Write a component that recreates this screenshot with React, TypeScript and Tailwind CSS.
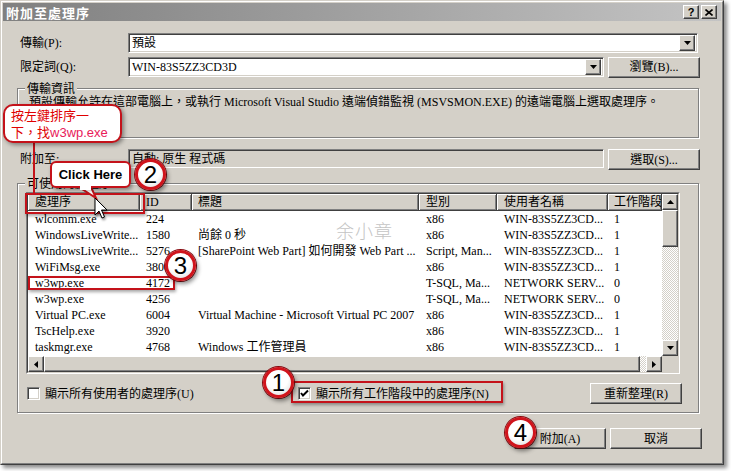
import React from "react";

const SERIF = "font-['Liberation_Serif','Noto_Sans_CJK_TC',serif]";

const rows: string[][] = [
  ["wlcomm.exe", "224", "", "x86", "WIN-83S5ZZ3CD...", "1"],
  ["WindowsLiveWrite...", "1580", "尚餘 0 秒", "x86", "WIN-83S5ZZ3CD...", "1"],
  ["WindowsLiveWrite...", "5276", "[SharePoint Web Part] 如何開發 Web Part ...", "Script, Man...", "WIN-83S5ZZ3CD...", "1"],
  ["WiFiMsg.exe", "3800", "", "x86", "WIN-83S5ZZ3CD...", "1"],
  ["w3wp.exe", "4172", "", "T-SQL, Ma...", "NETWORK SERV...", "0"],
  ["w3wp.exe", "4256", "", "T-SQL, Ma...", "NETWORK SERV...", "0"],
  ["Virtual PC.exe", "6004", "Virtual Machine - Microsoft Virtual PC 2007", "x86", "WIN-83S5ZZ3CD...", "1"],
  ["TscHelp.exe", "3920", "", "x86", "WIN-83S5ZZ3CD...", "1"],
  ["taskmgr.exe", "4768", "Windows 工作管理員", "x86", "WIN-83S5ZZ3CD...", "1"],
];

const colCls = [
  "w-[112px] pl-[7px]",
  "w-[52px] pl-[6px]",
  "w-[227px] pl-[6px]",
  "w-[78px] pl-[7px]",
  "w-[111px] pl-[7px]",
  "w-[54px] pl-[6px]",
];
const headers = ["處理序", "ID", "標題", "型別", "使用者名稱", "工作階段"];

const RAISED =
  "bg-[#d4d0c8] border border-t-white border-l-white border-r-[#404040] border-b-[#404040] shadow-[inset_-1px_-1px_0_#808080]";
const SUNKEN =
  "border border-t-[#808080] border-l-[#808080] border-r-white border-b-white shadow-[inset_1px_1px_0_#404040,inset_-1px_-1px_0_#d4d0c8]";
const HATCH =
  "bg-[repeating-conic-gradient(#d4d0c8_0_25%,#ffffff_0_50%)] bg-[length:2px_2px]";

function Tri({ dir }: { dir: "up" | "down" | "left" | "right" }) {
  const pts =
    dir === "down"
      ? "0,0 7,0 3.5,4"
      : dir === "up"
      ? "0,4 7,4 3.5,0"
      : dir === "left"
      ? "4,0 4,7 0,3.5"
      : "0,0 0,7 4,3.5";
  const w = dir === "down" || dir === "up" ? 7 : 4;
  const h = dir === "down" || dir === "up" ? 4 : 7;
  return (
    <svg width={w} height={h} viewBox={`0 0 ${w} ${h}`}>
      <polygon points={pts} fill="#000" />
    </svg>
  );
}

function ArrowBtn({ dir, className = "" }: { dir: "up" | "down" | "left" | "right"; className?: string }) {
  return (
    <div className={`${RAISED} flex items-center justify-center shrink-0 ${className}`}>
      <Tri dir={dir} />
    </div>
  );
}

function Btn({ children, className = "" }: { children: React.ReactNode; className?: string }) {
  return (
    <div
      className={`${RAISED} flex items-center justify-center h-[21px] w-[92px] shrink-0 text-[12px] leading-none text-black ${className}`}
    >
      {children}
    </div>
  );
}

function CheckBox({ checked }: { checked?: boolean }) {
  return (
    <div className={`${SUNKEN} w-[13px] h-[13px] bg-white shrink-0 flex items-center justify-center`}>
      {checked && (
        <svg width="9" height="9" viewBox="0 0 9 9">
          <path d="M1 4 L3 6.5 L8 1.5" stroke="#000" strokeWidth="2" fill="none" />
        </svg>
      )}
    </div>
  );
}

function Num({ n, className }: { n: string; className: string }) {
  return (
    <div
      className={`absolute w-[31px] h-[31px] rounded-full border-[3px] border-[#d0141c] bg-[radial-gradient(circle_at_45%_35%,#ffffff_50%,#d6d6d6)] shadow-[2px_3px_4px_rgba(0,0,0,0.45),0_0_0_1px_#8a0a10] flex items-center justify-center font-['Liberation_Sans',sans-serif] text-[24px] leading-none text-black ${className}`}
    >
      {n}
    </div>
  );
}

export default function App() {
  return (
    <div className={`relative w-[731px] h-[471px] bg-white overflow-hidden ${SERIF}`}>
      {/* window */}
      <div className="w-[724px] h-[465px] border border-t-[#d4d0c8] border-l-[#d4d0c8] border-r-[#404040] border-b-[#404040] shadow-[3px_3px_4px_rgba(0,0,0,0.45)]">
        <div className="w-full h-full border border-t-white border-l-white border-r-[#808080] border-b-[#808080] bg-[#d4d0c8] p-[1px] flex flex-col">
          {/* title bar */}
          <div className="h-[18px] shrink-0 flex items-center bg-gradient-to-r from-[#808080] to-[#c4c4c4] pl-[3px] pr-[4px]">
            <span className="text-white font-bold text-[13px] leading-none font-['Noto_Sans_CJK_TC',sans-serif] tracking-[1px]">
              附加至處理序
            </span>
            <div className="ml-auto flex gap-[2px]">
              <div className={`${RAISED} w-[16px] h-[14px] flex items-center justify-center text-[11px] font-bold leading-none font-['Liberation_Sans',sans-serif]`}>
                ?
              </div>
              <div className={`${RAISED} w-[16px] h-[14px] flex items-center justify-center`}>
                <svg width="8" height="7" viewBox="0 0 8 7">
                  <path d="M0.5 0.5 L7.5 6.5 M7.5 0.5 L0.5 6.5" stroke="#000" strokeWidth="1.6" />
                </svg>
              </div>
            </div>
          </div>

          {/* body */}
          <div className="flex-1 flex flex-col text-[12px] leading-[14px] text-black">
            {/* row 1 */}
            <div className="mt-[12px] flex items-center h-[20px] pl-[17px]">
              <span className="w-[108px]">傳輸(P):</span>
              <div className={`${SUNKEN} w-[570px] h-[20px] bg-white flex items-center pl-[3px] pr-[2px]`}>
                <span>預設</span>
                <ArrowBtn dir="down" className="ml-auto w-[16px] h-[16px]" />
              </div>
            </div>
            {/* row 2 */}
            <div className="mt-[4px] flex items-center h-[20px] pl-[17px]">
              <span className="w-[108px]">限定詞(Q):</span>
              <div className={`${SUNKEN} w-[476px] h-[20px] bg-white flex items-center pl-[3px] pr-[2px]`}>
                <span>WIN-83S5ZZ3CD3D</span>
                <ArrowBtn dir="down" className="ml-auto w-[16px] h-[16px]" />
              </div>
              <Btn className="ml-[4px] h-[20px]">瀏覽(B)...</Btn>
            </div>
            {/* group 1 */}
            <div className="relative mt-[11px] ml-[14px] w-[682px] h-[50px] border border-[#808080] shadow-[inset_1px_1px_0_#fff,1px_1px_0_#fff] pl-[11px] pt-[6px]">
              <span className="absolute -top-[7px] left-[7px] px-[2px] bg-[#d4d0c8]">傳輸資訊</span>
              <div className="whitespace-nowrap">
                預設傳輸允許在這部電腦上，或執行 Microsoft Visual Studio 遠端偵錯監視 (MSVSMON.EXE) 的遠端電腦上選取處理序。
              </div>
            </div>
            {/* row 附加至 */}
            <div className="mt-[11px] flex items-start h-[21px] pl-[17px]">
              <span className="w-[108px] mt-[3px]">附加至:</span>
              <div className={`${SUNKEN} w-[476px] h-[19px] bg-[#d4d0c8] flex items-center pl-[3px]`}>
                自動: 原生 程式碼
              </div>
              <Btn className="ml-[4px]">選取(S)...</Btn>
            </div>
            {/* group 2 */}
            <div className="relative mt-[13px] ml-[14px] w-[682px] h-[230px] border border-[#808080] shadow-[inset_1px_1px_0_#fff,1px_1px_0_#fff] pl-[8px] pt-[8px]">
              <span className="absolute -top-[7px] left-[7px] px-[2px] bg-[#d4d0c8]">可使用的處理序</span>
              {/* list */}
              <div className={`relative w-[654px] h-[182px] border border-t-[#808080] border-l-[#808080] border-r-white border-b-white bg-white`}>
                <div className="w-full h-full border border-t-[#404040] border-l-[#404040] border-r-[#d4d0c8] border-b-[#d4d0c8] flex flex-col">
                  <div className="flex h-[162px]">
                    <div className="w-[634px] flex flex-col overflow-hidden">
                      <div className="flex h-[17px] shrink-0">
                        {headers.map((h, i) => (
                          <div
                            key={i}
                            className={`${colCls[i]} shrink-0 h-[17px] bg-[#d4d0c8] border-r border-b border-r-[#404040] border-b-[#404040] shadow-[inset_1px_1px_0_#fff,inset_-1px_-1px_0_#808080] flex items-center whitespace-nowrap overflow-hidden`}
                          >
                            {h}
                          </div>
                        ))}
                      </div>
                      {rows.map((r, ri) => (
                        <div key={ri} className="flex h-[16px] shrink-0 items-center">
                          {r.map((c, ci) => (
                            <div key={ci} className={`${colCls[ci]} shrink-0 whitespace-nowrap overflow-hidden`}>
                              {c}
                            </div>
                          ))}
                        </div>
                      ))}
                    </div>
                    {/* vscroll */}
                    <div className="w-[16px] flex flex-col">
                      <ArrowBtn dir="up" className="w-[16px] h-[16px]" />
                      <div className={`${RAISED} w-[16px] h-[37px]`} />
                      <div className={`flex-1 ${HATCH}`} />
                      <ArrowBtn dir="down" className="w-[16px] h-[16px]" />
                    </div>
                  </div>
                  {/* hscroll */}
                  <div className="flex h-[16px]">
                    <ArrowBtn dir="left" className="w-[16px] h-[16px]" />
                    <div className={`${RAISED} w-[596px] h-[16px]`} />
                    <div className={`w-[6px] h-[16px] ${HATCH}`} />
                    <ArrowBtn dir="right" className="w-[16px] h-[16px]" />
                    <div className="w-[16px] h-[16px] bg-[#d4d0c8]" />
                  </div>
                </div>
                <span className="absolute left-[309px] top-[28px] text-[18px] leading-none text-[#c4c4c4] font-['Noto_Sans_CJK_TC',sans-serif] font-light tracking-[1px]">
                  余小章
                </span>
              </div>
              {/* checkbox row */}
              <div className="mt-[9px] flex items-center h-[21px]">
                <div className="w-[272px] flex items-center pl-[1px] gap-[5px]">
                  <CheckBox />
                  <span>顯示所有使用者的處理序(U)</span>
                </div>
                <div className="flex items-center gap-[5px]">
                  <CheckBox checked />
                  <span>顯示所有工作階段中的處理序(N)</span>
                </div>
                <Btn className="ml-auto mr-[16px]">重新整理(R)</Btn>
              </div>
            </div>
            {/* bottom buttons */}
            <div className="mt-[15px] flex justify-end gap-[4px] pr-[19px]">
              <Btn>附加(A)</Btn>
              <Btn>取消</Btn>
            </div>
          </div>
        </div>
      </div>

      {/* annotations */}
      <div className="absolute left-[25px] top-[193px] w-[120px] h-[21px] border-2 border-[#c4121a] shadow-[1px_2px_3px_rgba(0,0,0,0.35)]" />
      <div className="absolute left-[28px] top-[276px] w-[147px] h-[14px] border-2 border-[#c4121a] shadow-[1px_2px_3px_rgba(0,0,0,0.35)]" />
      <div className="absolute left-[291px] top-[381px] w-[212px] h-[22px] border-2 border-[#c4121a] shadow-[1px_2px_3px_rgba(0,0,0,0.35)]" />

      {/* callout 1 line */}
      <div className="absolute left-[33px] top-[141px] w-[2px] h-[53px] bg-[#c4121a]" />
      <div className="absolute left-[3px] top-[104px] w-[119px] h-[39px] rounded-[10px] border-2 border-[#c4121a] bg-white shadow-[2px_2px_4px_rgba(0,0,0,0.4)] pl-[6px] pt-[1px] font-['Liberation_Sans','Noto_Sans_CJK_TC',sans-serif] text-[13px] leading-[17px] text-[#e00000]">
        <div>按左鍵排序一</div>
        <div>
          下，找<span className="text-[#e8205a]">w3wp.exe</span>
        </div>
      </div>

      {/* click here callout */}
      <svg className="absolute left-[70px] top-[184px]" width="32" height="18" viewBox="0 0 32 18">
        <polygon points="9,3 21,3 26,14" fill="#fff" stroke="#c4121a" strokeWidth="2" />
      </svg>
      <div className="absolute left-[50px] top-[161px] w-[81px] h-[27px] rounded-[6px] border-2 border-[#c4121a] bg-white shadow-[2px_2px_4px_rgba(0,0,0,0.4)] flex items-center justify-center font-['Liberation_Sans',sans-serif] font-bold text-[13px] leading-none text-black">
        Click Here
      </div>
      <svg className="absolute left-[79px] top-[186px]" width="14" height="4" viewBox="0 0 14 4">
        <rect x="1" y="0" width="11" height="4" fill="#fff" />
      </svg>

      {/* cursor */}
      <svg className="absolute left-[94px] top-[197px] drop-shadow-[1px_2px_1px_rgba(0,0,0,0.4)]" width="14" height="24" viewBox="0 0 14 24">
        <path d="M1 1 L1 18 L5 14 L8 21 L10.5 20 L7.5 13 L13 13 Z" fill="#fff" stroke="#000" strokeWidth="1" strokeLinejoin="miter" />
      </svg>

      <Num n="2" className="left-[135px] top-[159px]" />
      <Num n="3" className="left-[165px] top-[250px]" />
      <Num n="1" className="left-[263px] top-[367px]" />
      <Num n="4" className="left-[505px] top-[417px]" />
    </div>
  );
}
